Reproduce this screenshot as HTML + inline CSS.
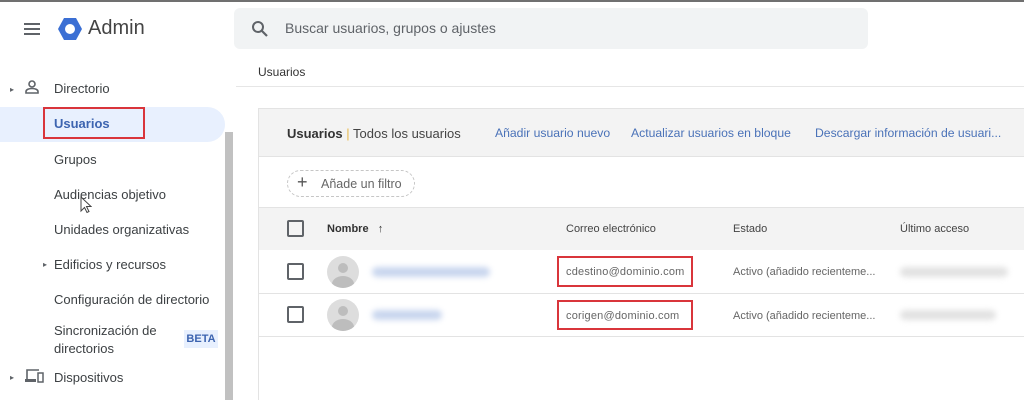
<!DOCTYPE html>
<html><head><meta charset="utf-8"><style>
*{margin:0;padding:0;box-sizing:border-box}
body{width:1024px;height:400px;overflow:hidden;background:#fff;font-family:"Liberation Sans",Arial,sans-serif;color:#3c4043;position:relative}
.a{position:absolute;white-space:nowrap}
.lnk{font-size:12.2px;color:#4a72b8}
.cb{position:absolute;width:17px;height:17px;border:2px solid #5f6368;border-radius:2px}
.av{position:absolute;width:32px;height:32px;border-radius:50%;background:#ddd;overflow:hidden}
.av:before{content:"";position:absolute;left:11px;top:7px;width:10px;height:10px;border-radius:50%;background:#bdbdbd}
.av:after{content:"";position:absolute;left:5px;top:20px;width:22px;height:16px;border-radius:50%;background:#bdbdbd}
.bl{position:absolute;height:10px;border-radius:5px;filter:blur(3px)}
.red{position:absolute;border:2px solid #d9353b}
</style></head><body>
<div class="a" style="left:0;top:0;width:1024px;height:2px;background:#707070"></div>
<div class="a" style="left:24px;top:23px;width:16px;height:2px;background:#5f6368;box-shadow:0 5px 0 #5f6368,0 10px 0 #5f6368"></div>
<svg class="a" style="left:57px;top:17px" width="26" height="24" viewBox="0 0 26 24"><polygon points="7,1 19,1 25,12 19,23 7,23 1,12" fill="#3b6fd4"/><circle cx="13" cy="12" r="5" fill="#fff"/></svg>
<div class="a" style="left:88px;top:17px;font-size:20px;color:#444">Admin</div>
<div class="a" style="left:234px;top:8px;width:634px;height:41px;background:#f1f3f4;border-radius:6px"></div>
<svg class="a" style="left:251px;top:20px" width="18" height="18" viewBox="0 0 18 18"><circle cx="7" cy="7" r="5" fill="none" stroke="#5f6368" stroke-width="2"/><line x1="11" y1="11" x2="16" y2="16" stroke="#5f6368" stroke-width="2.2"/></svg>
<div class="a" style="left:285px;top:20px;font-size:14px;color:#5f6368">Buscar usuarios, grupos o ajustes</div>
<div class="a" style="left:258px;top:65px;font-size:12px;color:#333">Usuarios</div>
<div class="a" style="left:236px;top:86px;width:788px;height:1px;background:#e6e6e6"></div>
<div class="a" style="left:10px;top:85px;font-size:8px;color:#5f6368">▸</div>
<svg class="a" style="left:24px;top:79px" width="16" height="16" viewBox="0 0 16 16"><circle cx="8" cy="5" r="3" fill="none" stroke="#5f6368" stroke-width="1.6"/><path d="M2 14v-1.5c0-2 3-3 6-3s6 1 6 3V14z" fill="none" stroke="#5f6368" stroke-width="1.6"/></svg>
<div class="a" style="left:54px;top:81px;font-size:13px">Directorio</div>
<div class="a" style="left:0;top:107px;width:225px;height:35px;background:#e8f0fe;border-radius:0 18px 18px 0"></div>
<div class="red" style="left:43px;top:107px;width:102px;height:32px"></div>
<div class="a" style="left:54px;top:116px;font-size:13px;font-weight:bold;color:#3d64b0">Usuarios</div>
<div class="a" style="left:54px;top:152px;font-size:13px">Grupos</div>
<div class="a" style="left:54px;top:187px;font-size:13px">Audiencias objetivo</div>
<svg class="a" style="left:80px;top:196px" width="12" height="18" viewBox="0 0 12 18"><path d="M1 1v14l3.5-3.5 2.5 5 2-1-2.5-5H11z" fill="#fff" stroke="#444" stroke-width="1"/></svg>
<div class="a" style="left:54px;top:222px;font-size:13px">Unidades organizativas</div>
<div class="a" style="left:43px;top:260px;font-size:8px;color:#5f6368">▸</div>
<div class="a" style="left:54px;top:257px;font-size:13px">Edificios y recursos</div>
<div class="a" style="left:54px;top:292px;font-size:13px">Configuración de directorio</div>
<div class="a" style="left:54px;top:322px;font-size:13px;line-height:18px">Sincronización de<br>directorios</div>
<div class="a" style="left:184px;top:330px;width:34px;height:18px;background:#e8f0fe;font-size:11px;font-weight:bold;color:#3d64b0;text-align:center;line-height:18px">BETA</div>
<div class="a" style="left:10px;top:373px;font-size:8px;color:#5f6368">▸</div>
<svg class="a" style="left:24px;top:368px" width="20" height="16" viewBox="0 0 20 16"><path d="M3 11V2h12" fill="none" stroke="#5f6368" stroke-width="1.6"/><rect x="1" y="11" width="11" height="3" fill="#5f6368"/><rect x="14" y="5" width="5" height="9" fill="none" stroke="#5f6368" stroke-width="1.5"/></svg>
<div class="a" style="left:54px;top:370px;font-size:13px">Dispositivos</div>
<div class="a" style="left:225px;top:132px;width:8px;height:268px;background:#c1c1c1"></div>
<div class="a" style="left:258px;top:108px;width:766px;height:292px;border-left:1px solid #e3e3e3;border-top:1px solid #e3e3e3"></div>
<div class="a" style="left:259px;top:109px;width:765px;height:48px;background:#f3f3f3;border-bottom:1px solid #e3e3e3"></div>
<div class="a" style="left:287px;top:126px;font-size:13px;color:#444"><b style="color:#333">Usuarios</b> <span style="color:#e8b94b">|</span> Todos los usuarios</div>
<div class="a lnk" style="left:495px;top:126px">Añadir usuario nuevo</div>
<div class="a lnk" style="left:631px;top:126px">Actualizar usuarios en bloque</div>
<div class="a lnk" style="left:815px;top:126px">Descargar información de usuari...</div>
<div class="a" style="left:287px;top:170px;width:128px;height:27px;border:1px dashed #c6c6c6;border-radius:14px"></div>
<div class="a" style="left:297px;top:172px;font-size:18px;color:#555">+</div>
<div class="a" style="left:321px;top:177px;font-size:12.5px;color:#666">Añade un filtro</div>
<div class="a" style="left:259px;top:207px;width:765px;height:43px;background:#f3f3f3;border-top:1px solid #e3e3e3"></div>
<div class="cb" style="left:287px;top:220px"></div>
<div class="a" style="left:327px;top:223px;font-size:11px;color:#333;font-weight:bold">Nombre &nbsp; <span style="font-weight:normal">↑</span></div>
<div class="a" style="left:566px;top:223px;font-size:11px;color:#444">Correo electrónico</div>
<div class="a" style="left:733px;top:223px;font-size:11px;color:#444">Estado</div>
<div class="a" style="left:900px;top:223px;font-size:11px;color:#444">Último acceso</div>
<div class="a" style="left:259px;top:293px;width:765px;height:1px;background:#e3e3e3"></div>
<div class="a" style="left:259px;top:336px;width:765px;height:1px;background:#e3e3e3"></div>
<div class="cb" style="left:287px;top:263px"></div>
<div class="cb" style="left:287px;top:306px"></div>
<div class="av" style="left:327px;top:256px"></div>
<div class="av" style="left:327px;top:299px"></div>
<div class="bl" style="left:372px;top:267px;width:118px;background:#c9d6ee"></div>
<div class="bl" style="left:372px;top:310px;width:70px;background:#c9d6ee"></div>
<div class="red" style="left:557px;top:256px;width:136px;height:31px"></div>
<div class="red" style="left:557px;top:300px;width:136px;height:30px"></div>
<div class="a" style="left:566px;top:266px;font-size:11px;color:#666;letter-spacing:.2px">cdestino@dominio.com</div>
<div class="a" style="left:566px;top:310px;font-size:11px;color:#666;letter-spacing:.2px">corigen@dominio.com</div>
<div class="a" style="left:733px;top:266px;font-size:11px;color:#666">Activo (añadido recienteme...</div>
<div class="a" style="left:733px;top:310px;font-size:11px;color:#666">Activo (añadido recienteme...</div>
<div class="bl" style="left:900px;top:267px;width:108px;background:#e2e2e2"></div>
<div class="bl" style="left:900px;top:310px;width:96px;background:#e2e2e2"></div>
</body></html>
